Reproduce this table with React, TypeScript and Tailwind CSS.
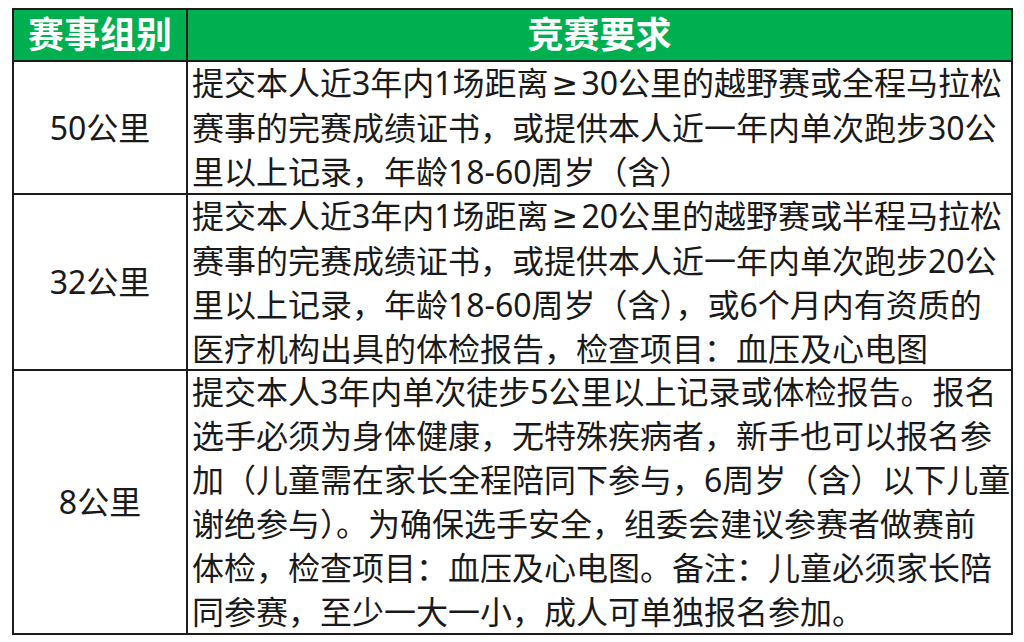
import React from 'react';

const FONT = { fontFamily: '"Noto Sans", "Noto Sans CJK SC", sans-serif' };

const ROWS: { group: string; lines: string[]; height: string; last?: boolean }[] = [
  {
    group: '50公里',
    height: 'h-[133px]',
    lines: [
      '提交本人近3年内1场距离≥30公里的越野赛或全程马拉松',
      '赛事的完赛成绩证书，或提供本人近一年内单次跑步30公',
      '里以上记录，年龄18-60周岁（含）',
    ],
  },
  {
    group: '32公里',
    height: 'h-[176px]',
    lines: [
      '提交本人近3年内1场距离≥20公里的越野赛或半程马拉松',
      '赛事的完赛成绩证书，或提供本人近一年内单次跑步20公',
      '里以上记录，年龄18-60周岁（含），或6个月内有资质的',
      '医疗机构出具的体检报告，检查项目：血压及心电图',
    ],
  },
  {
    group: '8公里',
    height: 'h-[262px]',
    last: true,
    lines: [
      '提交本人3年内单次徒步5公里以上记录或体检报告。报名',
      '选手必须为身体健康，无特殊疾病者，新手也可以报名参',
      '加（儿童需在家长全程陪同下参与，6周岁（含）以下儿童',
      '谢绝参与）。为确保选手安全，组委会建议参赛者做赛前',
      '体检，检查项目：血压及心电图。备注：儿童必须家长陪',
      '同参赛，至少一大一小，成人可单独报名参加。',
    ],
  },
];

// the ≥ sign in the source is a narrow latin glyph, not the CJK one
function Line({ text }: { text: string }) {
  const parts = text.split('≥');
  return (
    <div className="text-[32px] leading-[44px] whitespace-nowrap">
      {parts.map((p, i) => (
        <React.Fragment key={i}>
          {i > 0 && (
            <span className="px-[3px]" style={{ fontFamily: '"DejaVu Sans", sans-serif' }}>
              ≥
            </span>
          )}
          {p}
        </React.Fragment>
      ))}
    </div>
  );
}

export default function App() {
  return (
    <div className="w-[1024px] h-[642px] bg-white pt-2 pl-3 overflow-hidden" style={FONT}>
      <div className="w-[1001px] border-2 border-[#1c1c1c] grid grid-cols-[174px_1fr] text-[#1a1a1a]">
        {/* header */}
        <div className="h-[52px] bg-[#00b050] border-r-2 border-b-2 border-[#1c1c1c] flex items-center justify-center">
          <span className="text-[36px] font-bold text-white leading-none">赛事组别</span>
        </div>
        <div className="h-[52px] bg-[#00b050] border-b-2 border-[#1c1c1c] flex items-center justify-center">
          <span className="text-[36px] font-bold text-white leading-none">竞赛要求</span>
        </div>

        {ROWS.map(row => (
          <React.Fragment key={row.group}>
            <div
              className={`${row.height} border-r-2 border-[#1c1c1c] flex items-center justify-center text-[32px] ${row.last ? '' : 'border-b-2'}`}
            >
              {row.group}
            </div>
            <div
              className={`${row.height} border-[#1c1c1c] pl-1 overflow-hidden flex flex-col justify-center ${row.last ? '' : 'border-b-2'}`}
            >
              {row.lines.map(line => (
                <Line key={line} text={line} />
              ))}
            </div>
          </React.Fragment>
        ))}
      </div>
    </div>
  );
}
